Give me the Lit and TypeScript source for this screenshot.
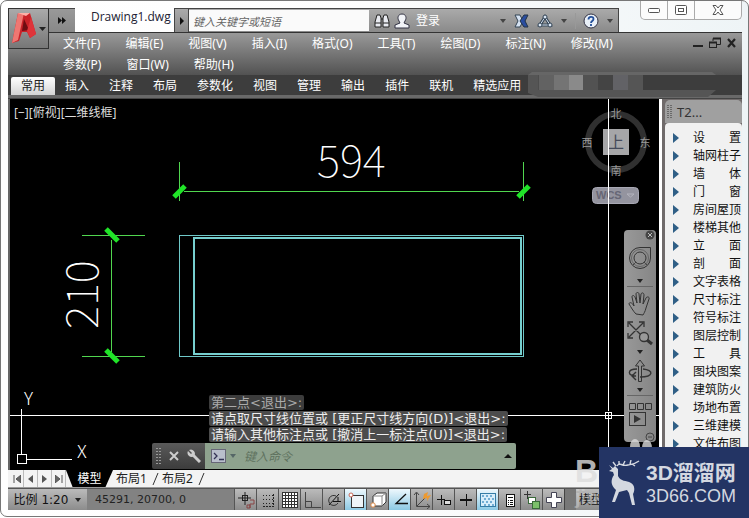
import { LitElement, html, css, svg } from "lit";
import { customElement } from "lit/decorators.js";
import { classMap } from "lit/directives/class-map.js";

const menus = ["文件(F)", "编辑(E)", "视图(V)", "插入(I)", "格式(O)", "工具(T)", "绘图(D)", "标注(N)", "修改(M)", "参数(P)", "窗口(W)", "帮助(H)"];
const ribbonTabs = ["常用", "插入", "注释", "布局", "参数化", "视图", "管理", "输出", "插件", "联机", "精选应用"];
const paletteItems = ["设　　置", "轴网柱子", "墙　　体", "门　　窗", "房间屋顶", "楼梯其他", "立　　面", "剖　　面", "文字表格", "尺寸标注", "符号标注", "图层控制", "工　　具", "图块图案", "建筑防火", "场地布置", "三维建模", "文件布图"];

const icon = (w: number, h: number, body: unknown) =>
  html`<svg width=${w} height=${h} viewBox="0 0 ${w} ${h}" fill="none" aria-hidden="true">${body}</svg>`;

const caret = (color = "#222") => icon(6, 4, svg`<path d="M0 0h6L3 4z" fill=${color}/>`);

const statusTools = [
  { name: "推断约束", on: false, body: svg`<path d="M8 1v13M1 7h13" stroke="#222"/><rect x="5.500" y="4.500" width="5" height="5" stroke="#222"/><path d="M13 9h4v4h-4v4M10 14h3v3h-3z" stroke="#844"/>` },
  { name: "捕捉模式", on: false, body: svg`<path d="M4 4.500h11M4 8.500h11M4 12.500h11" stroke="#222" stroke-dasharray="1 2"/><path d="M14.500 3v11M4 15.500h11" stroke="#222" stroke-dasharray="2 1"/>` },
  { name: "栅格显示", on: false, body: svg`<rect x="1.500" y="1.500" width="15" height="15" fill="#fff"/><path d="M1 1.500h16M1 4.500h16M1 7.500h16M1 10.500h16M1 13.500h16M1 16.500h16M1.500 1v16M4.500 1v16M7.500 1v16M10.500 1v16M13.500 1v16M16.500 1v16" stroke="#333"/>` },
  { name: "正交模式", on: false, body: svg`<path d="M2.500 1v15.500H18M2 10.500h6.500v6" stroke="#444"/>` },
  { name: "极轴追踪", on: false, body: svg`<path d="M4 14L14 3M8 10.500h8M13 6v5" stroke="#111"/><path d="M11 5a5 5 0 1 0 2 7" stroke="#333"/>` },
  { name: "对象捕捉", on: true, body: svg`<rect x="4.500" y="4.500" width="12" height="12" fill="#eef4f8" stroke="#333"/><circle cx="4" cy="4" r="2" fill="#fff" stroke="#c65"/>` },
  { name: "三维对象捕捉", on: false, body: svg`<path d="M4 5l4-3h9v9l-4 4H4z" fill="#fff" stroke="#333"/><path d="M4 5h9v10M13 5l4-3" stroke="#888"/><circle cx="4" cy="14" r="2.200" fill="#fff" stroke="#d84"/>` },
  { name: "对象捕捉追踪", on: true, body: svg`<path d="M15 3L5 12.500h12" stroke="#111" stroke-width="1.300"/>` },
  { name: "动态UCS", on: false, body: svg`<path d="M3.500 2v13.500H17M4 15L13 6" stroke="#444"/><path d="M1 4l2.500-3L6 4M14 13l3 2.500L14 18" stroke="#444"/><path d="M11 3l4-2-1 4 4-1-4 6 0-3-4 1z" fill="#ee9a30"/>` },
  { name: "动态输入", on: false, body: svg`<path d="M6.500 4v10M2 8.500h8" stroke="#111"/><rect x="9.500" y="9.500" width="6" height="4" fill="#ddd" stroke="#111"/>` },
  { name: "线宽", on: false, body: svg`<path d="M9.500 3v12" stroke="#111"/><path d="M3 9h12" stroke="#111" stroke-width="2"/>` },
  { name: "透明度", on: true, body: svg`<rect x="1.500" y="2.500" width="15" height="13" fill="#d8eefa" stroke="#357da6"/><path d="M3 5h12M5 8h11M3 11h12M5 14h11" stroke="#72aed4" stroke-width="2" stroke-dasharray="2 2"/>` },
  { name: "快捷特性", on: false, body: svg`<rect x="5.500" y="3.500" width="8" height="12" fill="#fff" stroke="#111"/><path d="M7 6.500h5M7 9.500h1M9 9.500h3M7 11.500h1M9 11.500h3M7 13.500h1M9 13.500h3" stroke="#111"/>` },
  { name: "选择循环", on: false, body: svg`<path d="M4.500 0v8M1 3.500h7" stroke="#333"/><rect x="5.500" y="6.500" width="7" height="6" fill="#fff" stroke="#3a6a3a"/><rect x="9.500" y="10.500" width="7" height="7" fill="#7cc06a" stroke="#3a6a3a"/>` },
  { name: "注释监视器", on: false, body: svg`<path d="M6.500 1.500h5v5h5v5h-5v5h-5v-5h-5v-5h5z" fill="#fff" stroke="#445"/>` },
];

@customElement("cad-viewport")
export class CadViewport extends LitElement {
  static styles = css`
    :host { display: block; position: relative; overflow: hidden; background: #000; }
    .drawing { position: absolute; inset: 0; width: 100%; height: 100%; }
    .dim { font: 100 44px "Noto Sans CJK SC", "Roboto", sans-serif; fill: #fff; }
    .axis { font: 300 18px "Noto Sans CJK SC", "Roboto", sans-serif; fill: #fff; }
    .compass { font: 11px "Noto Sans CJK SC", sans-serif; fill: #999; text-anchor: middle; }
    .top { font: 16px "Noto Sans CJK SC", sans-serif; fill: #444a5a; text-anchor: middle; }
    .wcs { font: 700 11px "Liberation Sans", sans-serif; fill: #666675; }
    .label { position: relative; display: block; padding: 6px 4px; color: #ddd; font: 12px/16px "Noto Sans", "Noto Sans CJK SC", sans-serif; }
    button { border: 0; padding: 0; background: none; display: flex; align-items: center; justify-content: center; }
    .navbar { position: absolute; right: 3px; top: 131px; width: 32px; height: 212px; border-radius: 4px; background: linear-gradient(90deg, #999, #858585); display: flex; flex-direction: column; align-items: center; box-sizing: border-box; }
    .navbar hr { width: 26px; margin: 0; border: 0; border-top: 1px solid #666; }
    .navbar .corner { align-self: flex-end; width: 12px; height: 10px; }
    .wheel { height: 36px; }
    .pan { height: 30px; margin-top: 2px; }
    .zoom { height: 28px; }
    .drop { height: 10px; width: 16px; }
    .orbit { height: 28px; }
    .show { height: 34px; }
    .navbar .custom { margin-top: auto; }
    .command { position: absolute; left: 142px; bottom: 1px; width: 364px; max-width: 80%; }
    .history { margin: 0 0 1px; padding: 0 0 0 57px; display: flex; flex-direction: column; align-items: flex-start; gap: 1px; list-style: none; }
    .history li { background: #4c4c4c; color: #eee; border-radius: 2px; padding: 0 2px; font: 13px/15px "DejaVu Sans", "Noto Sans CJK SC", sans-serif; white-space: nowrap; height: 15px; }
    .history .old { background: #3c3c3c; color: #aaa; }
    .entry { display: flex; height: 26px; border-radius: 2px; overflow: hidden; }
    .handle { width: 53px; background: linear-gradient(#5a5a5a, #3c3c3c); display: flex; align-items: center; justify-content: space-between; padding: 0 4px; box-sizing: border-box; }
    .prompt { flex: 1; min-width: 0; background: #8ea28e; display: flex; align-items: center; gap: 4px; padding: 0 4px 0 6px; }
    .prompt input { flex: 1; min-width: 0; border: 0; outline: 0; padding: 0 0 0 4px; background: none; font: italic 12px/20px "Noto Sans CJK SC", sans-serif; }
    .prompt input::placeholder { color: #5f725f; opacity: 1; }
  `;

  render() {
    return html`
      <svg class="drawing" role="img" aria-label="图形">
        <g transform="translate(-10 -99)" fill="none">
          <g stroke="#51d64f">
            <path d="M179.500 162v39M523.500 162v39M184 191.500h335M82 235.500h63M82 356.500h63M111.500 240v112"/>
            <path d="M174 197l11-11M518 197l11-11M106 229l12 12M106 350l12 12" stroke="#20e428" stroke-width="5"/>
          </g>
          <rect x="179.500" y="235.500" width="344" height="121" stroke="#6fc8c8"/>
          <rect x="194" y="238" width="327" height="116" stroke="#76cfcf" stroke-width="2"/>
          <text class="dim" x="317" y="177">594</text>
          <text class="dim" transform="translate(98 329) rotate(-90)">210</text>
          <g stroke="#fff">
            <path d="M21.500 409v46M26 459.500h46"/>
            <rect x="17.500" y="454.500" width="9" height="9"/>
          </g>
          <text class="axis" x="24" y="405">Y</text>
          <text class="axis" x="77" y="458">X</text>
          <circle cx="616" cy="142" r="28" stroke="#303030" stroke-width="6"/>
          <rect x="603" y="129" width="26" height="26" fill="#a6a6a8"/>
          <text class="top" x="616" y="148">上</text>
          <text class="compass" x="616" y="118">北</text>
          <text class="compass" x="616" y="175">南</text>
          <text class="compass" x="587" y="147">西</text>
          <text class="compass" x="645" y="147">东</text>
          <rect x="592.500" y="187.500" width="46" height="16" rx="4" fill="#94949f" stroke="#a8a8b4"/>
          <text class="wcs" x="596" y="199">WCS</text>
          <path d="M627 194h7l-3.500 3z" stroke="#b4b4be"/>
          <path d="M608.500 99v312M608.500 419v1000M10 415.500h595M612 415.500h1000" stroke="#fff"/>
          <rect x="605.500" y="412.500" width="6" height="6" stroke="#fff"/>
          <path d="M608.500 412v7M605 415.500h7" stroke="#fff"/>
        </g>
      </svg>
      <span class="label">[−][俯视][二维线框]</span>
      <div class="navbar">
        <button class="corner" aria-label="关闭">${icon(10, 10, svg`<circle cx="5" cy="5" r="4.500" fill="#444"/><path d="M3 3l4 4M7 3L3 7" stroke="#bbb"/>`)}</button>
        <button class="wheel" aria-label="导航控制盘">${icon(24, 24, svg`<path d="M12 1.500h10.500V12A10.500 10.500 0 1 1 12 1.500z" stroke="#333"/><circle cx="12" cy="12" r="6" stroke="#333"/><path d="M5 19l3-3M19 19l-3-3" stroke="#444"/><circle cx="12" cy="12" r="8.500" stroke="#666"/>`)}</button>
        <button class="drop" aria-label="控制盘选项">${caret()}</button>
        <hr />
        <button class="pan" aria-label="平移">${icon(24, 26, svg`<path d="M8 23C5 20 3 16 1 13c0-2 3-2 5 2L4 6c0-2 2-2 3 0l2 6-1-9c0-2 3-2 3 0l1 9 1-9c1-2 3-1 3 1l-1 9 3-6c1-2 4-1 3 1l-3 9c-1 4-2 5-3 7z" stroke="#333" stroke-linejoin="round"/>`)}</button>
        <button class="zoom" aria-label="范围缩放">${icon(26, 25, svg`<path d="M2 2l14 14M16 2L2 16M1 6V1h5M12 1h5v5M1 12v5h5" stroke="#333" stroke-width="1.300"/><circle cx="17" cy="16" r="4.500" fill="#999" stroke="#333" stroke-width="1.300"/><path d="M20 19l5 4" stroke="#333" stroke-width="3"/>`)}</button>
        <button class="drop" aria-label="缩放选项">${caret()}</button>
        <button class="orbit" aria-label="动态观察">${icon(26, 25, svg`<path d="M11.500 22.500V7h-3L13 1l4.500 6h-3v15.500z" stroke="#333"/><path d="M10 10C0 10 0 17 9 17M16 10c11 1 11 8-3 8M9 13l-4 4 4 4" stroke="#333" stroke-width="1.400"/>`)}</button>
        <button class="drop" aria-label="动态观察选项">${caret()}</button>
        <hr />
        <button class="show" aria-label="ShowMotion">${icon(24, 28, svg`<path d="M1.500 4.500h6v6h-6zM9.500 4.500h6v6h-6zM17.500 4.500h6v6h-6z" stroke="#333"/><rect x="1.500" y="13.500" width="16" height="13" stroke="#333"/><path d="M6 16v8l7-4z" fill="#333"/>`)}</button>
        <button class="corner custom" aria-label="自定义">${icon(10, 10, svg`<circle cx="5" cy="5" r="4" stroke="#444"/><path d="M3 5h4" stroke="#444"/>`)}</button>
      </div>
      <div class="command">
        <ul class="history">
          <li class="old">第二点&lt;退出&gt;:</li>
          <li>请点取尺寸线位置或 [更正尺寸线方向(D)]&lt;退出&gt;:</li>
          <li>请输入其他标注点或 [撤消上一标注点(U)]&lt;退出&gt;:</li>
        </ul>
        <div class="entry">
          <div class="handle">
            ${icon(5, 17, svg`<path d="M1 0v17M4 0v17" stroke="#999" stroke-width="2" stroke-dasharray="1 2"/>`)}
            <button aria-label="关闭命令行">${icon(10, 10, svg`<path d="M1 1l8 8M9 1L1 9" stroke="#ccc" stroke-width="2"/>`)}</button>
            <button aria-label="命令行设置">${icon(14, 14, svg`<path d="M5 5l8 8" stroke="#ccc" stroke-width="3"/><path d="M2 1l3 3-1 1-3-3a4 4 0 0 0 6 5 4 4 0 0 0-5-6z" fill="#ccc"/>`)}</button>
          </div>
          <div class="prompt">
            ${icon(15, 14, svg`<rect x=".5" y=".5" width="14" height="13" fill="#b9bfcc" stroke="#667"/><path d="M3 4l3 3-3 3M8 10.500h5" stroke="#335" stroke-width="1.300"/>`)}
            ${caret("#566")}
            <input aria-label="命令" placeholder="键入命令" />
            <button aria-label="展开历史">${icon(8, 4, svg`<path d="M0 4h8L4 0z" fill="#111"/>`)}</button>
          </div>
        </div>
      </div>
    `;
  }
}

@customElement("app-root")
export class AppRoot extends LitElement {
  static styles = css`
    :host { display: block; position: relative; height: 100vh; background: #fff; color: #fff; font: 12px/16px "Noto Sans", "Noto Sans CJK SC", sans-serif; overflow: hidden; }
    * { box-sizing: border-box; }
    button { border: 0; padding: 0; background: none; color: inherit; font: inherit; display: flex; align-items: center; justify-content: center; white-space: nowrap; }
    svg { flex: none; }
    .window { height: calc(100vh - 1px); border: 1px solid #777; border-radius: 7px; padding: 0 6px 6px 7px; display: flex; flex-direction: column; background: linear-gradient(90deg, #fff, #fdfdfd 50%, #eef4f6); }
    .header { display: grid; grid-template-columns: 41px 1fr; grid-template-rows: 31px auto; }
    .logo { grid-column: 1; grid-row: 1 / 3; z-index: 1; height: 41px; margin-top: 7px; border: 1px solid #333; background: linear-gradient(#aaa, #777); }
    .titlebar { grid-column: 2; grid-row: 1; display: flex; align-items: flex-end; min-width: 0; }
    .quick { width: 26px; height: 24px; background: linear-gradient(#999, #888); border-top: 1px solid #444; }
    .title { width: 99px; height: 24px; padding-left: 16px; color: #223; font: 12px/17px "Open Sans", sans-serif; white-space: nowrap; }
    .info { display: flex; align-items: center; height: 24px; flex: 0 1 445px; min-width: 0; background: linear-gradient(#aaa, #8a8a8a); border: 1px solid #444; border-bottom: 0; }
    .expand { width: 14px; align-self: stretch; border-right: 1px solid #444; }
    .search { flex: 0 1 180px; min-width: 0; height: 21px; border: 0; padding: 0 4px; background: #fafafa; color: #333; font: italic 11px/20px "Noto Sans CJK SC", sans-serif; }
    .search::placeholder { color: #666; opacity: 1; }
    .find { width: 25px; }
    .signin { gap: 6px; margin-right: auto; }
    .tools { display: flex; align-items: center; gap: 8px; padding-right: 5px; }
    .controls { display: flex; align-self: flex-start; margin-left: auto; border: 1px solid #aaa; border-top: 0; border-radius: 0 0 5px 5px; height: 19px; background: #fbfbfb; }
    .controls button { width: 27px; border-right: 1px solid #aaa; }
    .controls button:last-child { width: 46px; border-right: 0; }
    .menubar { grid-column: 1 / 3; grid-row: 2; display: flex; align-items: flex-start; background: linear-gradient(#999, #525252); border-top: 1px solid #333; }
    .menus { flex: 1; display: flex; flex-wrap: wrap; column-gap: 25px; padding-left: 55px; }
    .menus button { height: 21px; }
    .mdi { display: flex; gap: 6px; align-items: center; padding: 4px 5px 0 32px; }
    .ribbon { position: relative; display: flex; height: 20px; padding: 2px 0 0 3px; background: #3d3d3d; }
    .ribbon button { padding: 0 10px; height: 18px; }
    .ribbon .active { background: linear-gradient(#fff, #d4d4d4); color: #222; border-radius: 2px 2px 0 0; }
    .mosaic { position: absolute; right: 26px; top: -3px; }
    .strip { height: 4px; background: #696969; border-bottom: 1px solid #444; }
    .main { flex: 1; min-height: 0; display: flex; background: #666; padding-left: 2px; }
    cad-viewport { flex: 1; min-width: 0; }
    .palette { width: 83px; padding-left: 3px; border-left: 3px solid #fff; background: #706b6b; display: flex; flex-direction: column; overflow: hidden; }
    .palette header { height: 23px; flex: none; margin-top: 1px; display: flex; align-items: center; gap: 5px; padding-left: 2px; border-radius: 5px 5px 0 0; background: #a0a0a0; color: #333; font: 13px/20px "Noto Sans", sans-serif; }
    .palette ul { flex: 1; min-height: 0; margin: 0; padding: 6px 0 0 8px; list-style: none; background: #f1f1f1; border-radius: 4px 4px 0 0; overflow: hidden; color: #111; }
    .palette li button { height: 18px; gap: 14px; }
    .layouts { display: flex; height: 18px; background: #f3f3f3; color: #222; border-bottom: 1px solid #999; padding-left: 2px; }
    .layouts .step { width: 14px; border-right: 1px solid #bbb; }
    .layouts .model { background: #000; color: #fff; width: 47px; clip-path: polygon(0 0, 100% 0, 84% 100%, 14% 100%); }
    .layouts .sheet { padding-left: 3px; gap: 5px; }
    .status { display: flex; height: 22px; color: #111; background: linear-gradient(#bbb, #8c8c8c); font: 12px/20px "DejaVu Sans", "Noto Sans CJK SC", sans-serif; overflow: hidden; border-top: 1px solid #555; }
    .scale { width: 79px; gap: 7px; }
    .coords { width: 147px; flex: none; display: flex; align-items: center; padding-left: 8px; background: #828282; color: #222; white-space: nowrap; font-size: 11px; }
    .status .tool { width: 22px; flex: none; border-left: 1px solid #555; }
    .status .on { background: linear-gradient(#eef8fd, #8cc9e4); }
    .gap { width: 12px; background: #777; border-left: 1px solid #444; }
    .space { padding-left: 3px; }
    .watermark { position: absolute; right: 0; bottom: 11px; width: 174px; height: 68px; color: #ddd; opacity: 0.8; font: 700 32px/32px "Liberation Sans", sans-serif; }
    .watermark svg { display: block; margin-left: 54px; height: 16px; }
    .watermark p { margin: 0; }
    .watermark .sub { font-size: 20px; line-height: 20px; opacity: 0.5; }
    .brand { position: absolute; right: 0; bottom: 0; width: 150px; height: 71px; background: #233464; color: #d4d8e0; display: flex; align-items: center; gap: 4px; padding-left: 9px; }
    .brand p { margin: 0; white-space: nowrap; }
    .cn { font: 700 21px/26px "Liberation Sans", "Noto Sans CJK SC", sans-serif; }
    .com { font: 18px/20px "Liberation Sans", sans-serif; }
  `;

  render() {
    return html`
      <div class="window">
        <div class="header">
          <button class="logo" aria-label="应用程序菜单">${icon(39, 39, svg`
            <path d="M9 4h12l6 21-6 4-3-6h-5l-3 9-7 2z" fill="#c92228"/>
            <path d="M9 4h6L9 31l-6 3z" fill="#ef7772"/>
            <path d="M15 10l5 11-7 1z" fill="#6e0d12"/>
            <path d="M9 4h12l-4 3z" fill="#ffb0a8"/>
            <path d="M18 22l3 7 6-4-5-17z" fill="#df343a"/>
            <path d="M30 18h7l-3.500 4z" fill="#222"/>`)}</button>
          <div class="titlebar">
            <button class="quick" aria-label="快速访问">${icon(8, 7, svg`<path d="M0 0v7l4-3.500zM4 0v7l4-3.500z" fill="#111"/>`)}</button>
            <div class="title">Drawing1.dwg</div>
            <div class="info">
              <button class="expand" aria-label="展开">${icon(4, 8, svg`<path d="M0 0v8l4-4z" fill="#111"/>`)}</button>
              <input class="search" aria-label="搜索" placeholder="键入关键字或短语" />
              <button class="find" aria-label="查找">${icon(16, 16, svg`<path d="M3 2h3l1 3v9H1V9zM10 2h3l2 7v5H9V5z" fill="#e8eaf0" stroke="#222"/><path d="M7 6h2M1 10h6M9 10h6" stroke="#222"/>`)}</button>
              <button class="signin">${icon(16, 16, svg`<path d="M5 8C3 5 4 1 8 1s5 4 3 7l-1 2 5 2v3H1v-3l5-2z" fill="#f1f3f7" stroke="#334"/>`)}登录</button>
              <div class="tools">
                ${caret("#444")}
                <button aria-label="Exchange">${icon(15, 14, svg`<path d="M1 1h5l3 6-3 6H1l3-6z" fill="#d5e2f2" stroke="#345"/><path d="M14 1h-4L6 7l4 6h4l-3-6z" fill="#2a4da0" stroke="#234"/>`)}</button>
                <button aria-label="保持连接">${icon(16, 14, svg`<path d="M8 3L3 11h10z" stroke="#345" stroke-width="3"/><path d="M8 3L3 11h10z" stroke="#d7e4f4"/><circle cx="8" cy="3" r="2" fill="#dce8f6" stroke="#345"/><circle cx="3" cy="11" r="2" fill="#dce8f6" stroke="#345"/><circle cx="13" cy="11" r="2" fill="#dce8f6" stroke="#345"/>`)}</button>
                ${caret("#444")}
                <button class="help" aria-label="帮助">${icon(24, 16, svg`<path d="M.5 0v16" stroke="#999"/><circle cx="16" cy="8" r="7" fill="#e9f0f8" stroke="#334"/><path d="M13.500 6.500c0-3.500 5-3.500 5-.5 0 2-2.500 2-2.500 4M16 11v2" stroke="#24509a" stroke-width="1.800"/>`)}</button>
                ${caret("#444")}
              </div>
            </div>
            <div class="controls">
              <button aria-label="最小化">${icon(12, 5, svg`<rect x=".5" y=".5" width="11" height="4" rx="1" fill="#fff" stroke="#555"/>`)}</button>
              <button aria-label="最大化">${icon(12, 10, svg`<rect x=".5" y=".5" width="11" height="9" rx="1" fill="#fff" stroke="#555"/><rect x="3.500" y="3.500" width="5" height="3" stroke="#555"/>`)}</button>
              <button aria-label="关闭">${icon(12, 10, svg`<path d="M1 .5h3l2 2.500L8 .5h3L8 5l3 4.500H8L6 7 4 9.500H1L4 5z" fill="#fff" stroke="#555"/>`)}</button>
            </div>
          </div>
          <div class="menubar">
            <nav class="menus" aria-label="菜单">${menus.map((m) => html`<button>${m}</button>`)}</nav>
            <div class="mdi">
              <button aria-label="最小化图形">${icon(10, 12, svg`<path d="M0 9h10" stroke="#222" stroke-width="2"/>`)}</button>
              <button aria-label="还原图形">${icon(12, 12, svg`<path d="M4 4V1.500h7.500v6H8" stroke="#222"/><path d="M4 1.500h8M0 5.500h8" stroke="#222" stroke-width="2"/><rect x=".5" y="5.500" width="7" height="5" stroke="#222"/>`)}</button>
              <button aria-label="关闭图形">${icon(10, 12, svg`<path d="M1 2l7 8M8 2l-7 8" stroke="#222" stroke-width="2.200"/>`)}</button>
            </div>
          </div>
        </div>
        <nav class="ribbon" aria-label="功能区">
          ${ribbonTabs.map((t, i) => html`<button class=${classMap({ active: i === 0 })}>${t}</button>`)}
          <span class="mosaic">${icon(190, 27, svg`
            <path d="M6 0h180l4 3H2z" fill="#666"/>
            <path d="M2 3h18v15h170l-8 7H12L2 21z" fill="#555"/>
            <path d="M12 3h8v15h-8z" fill="#4d4d4d"/><path d="M13 3h15v15H13z" fill="#626262"/>
            <path d="M28 3h15v15H28z" fill="#747474"/><path d="M43 3h14v15H43z" fill="#8a8a8a"/>
            <path d="M57 3h15v15H57z" fill="#525252"/><path d="M72 3h15v15H72z" fill="#444"/>
            <path d="M87 3h15v15H87z" fill="#626266"/><path d="M102 3h15v15h-15z" fill="#555"/>
            <path d="M117 3h73v15h-73z" fill="#3d3d3d"/>`)}</span>
        </nav>
        <div class="strip"></div>
        <div class="main">
          <cad-viewport></cad-viewport>
          <aside class="palette">
            <header>${icon(5, 13, svg`<path d="M1 0v13M4 0v13" stroke="#333" stroke-dasharray="1 1"/>`)}T2...</header>
            <ul>${paletteItems.map((p) => html`<li><button>${icon(6, 10, svg`<path d="M0 0v10l6-5z" fill="#2f5f86"/>`)}${p}</button></li>`)}</ul>
          </aside>
        </div>
        <div class="layouts">
          <button class="step" aria-label="第一个">${icon(8, 8, svg`<path d="M1 0v8M8 0v8L3 4z" stroke="#555" fill="#666"/>`)}</button>
          <button class="step" aria-label="上一个">${icon(5, 8, svg`<path d="M5 0v8L0 4z" fill="#555"/>`)}</button>
          <button class="step" aria-label="下一个">${icon(5, 8, svg`<path d="M0 0v8l5-4z" fill="#555"/>`)}</button>
          <button class="step" aria-label="最后一个">${icon(8, 8, svg`<path d="M7 0v8M0 0v8l5-4z" stroke="#555" fill="#666"/>`)}</button>
          <button class="model">模型</button>
          ${["布局1", "布局2"].map((s) => html`<button class="sheet">${s}${icon(7, 16, svg`<path d="M6 2L1 14" stroke="#333"/>`)}</button>`)}
        </div>
        <div class="status">
          <button class="scale">比例 1:20 ${caret()}</button>
          <span class="coords">45291, 20700, 0</span>
          ${statusTools.map((t) => html`<button class=${classMap({ tool: true, on: t.on })} aria-label=${t.name}>${icon(18, 18, t.body)}</button>`)}
          <span class="gap"></span>
          <button class="space">模型</button>
        </div>
      </div>
      <div class="watermark" aria-hidden="true">
        ${icon(24, 16, svg`<ellipse cx="6" cy="8" rx="5" ry="8" fill="#ddd"/><ellipse cx="18" cy="9" rx="5" ry="8" fill="#ddd"/>`)}
        <p>Ba</p>
        <p class="sub">jing</p>
      </div>
      <div class="brand">
        ${icon(34, 46, svg`<path d="M5 12l-4-1 3-2-3-4 4 3 2-2 3 3v7c3 6 8 4 13 7 4 2 4 8 2 11l2 11h-3l-3-12-2-3-8 2-4 10H4l4-12c-6-5-5-11-2-15z" fill="#d4d8e0"/><path d="M9 6C12 1 13 7 20 5c5-1 7-1 11-4M11 5V1M15 5l2-4M22 4l1-4M24 4l3 2M8 6L5 2" stroke="#d4d8e0" stroke-width="1.400"/>`)}
        <div>
          <p class="cn">3D溜溜网</p>
          <p class="com">3D66.COM</p>
        </div>
      </div>
    `;
  }
}
